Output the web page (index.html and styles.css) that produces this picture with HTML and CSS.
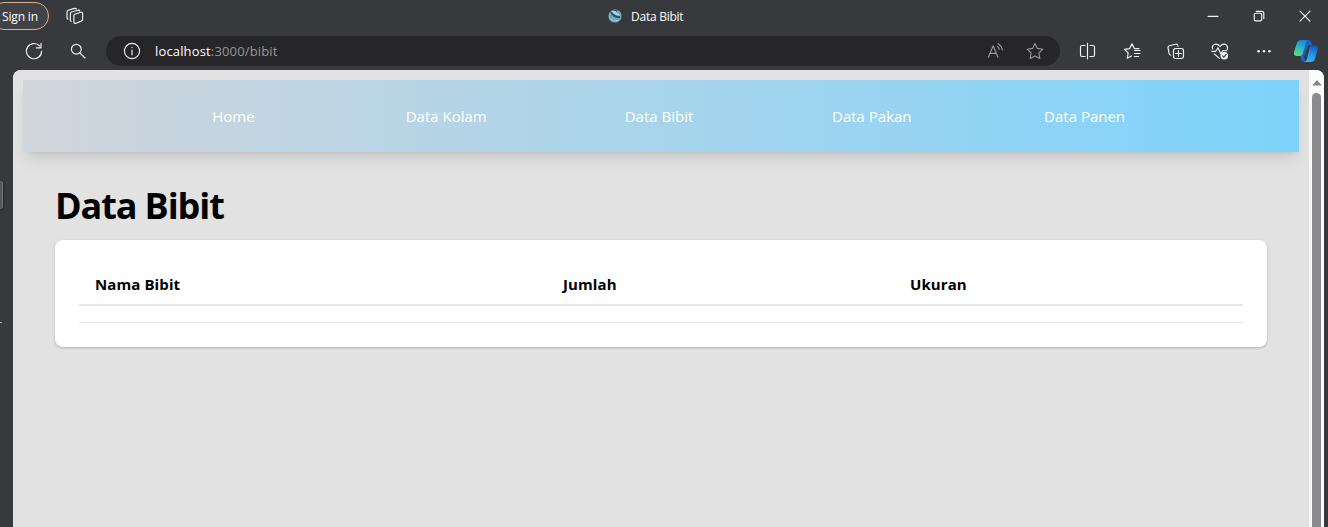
FILE: index.html
```html
<!DOCTYPE html>
<html lang="id">
<head>
<meta charset="utf-8">
<title>Data Bibit</title>
<link rel="stylesheet" href="styles.css">
</head>
<body>
<div class="window">
  <header class="titlebar">
    <div class="signin">Sign in</div>
    <svg class="icon workspaces" viewBox="0 0 20 20"><path d="M9.6 8.2 15.9 6.3Q17.6 6 17.6 7.5V13.2Q17.6 14.5 16.3 15.1L10.6 17.4Q8.9 17.8 8.9 16.2V9.3Q8.9 8.5 9.6 8.2ZM6.2 15.4Q5.3 15.2 5.3 14V7.8Q5.3 6.5 6.5 6L13 4.2Q14.5 4 14.8 5M3 13.2Q2 12.8 2 11.7V6Q2 4.7 3.2 4.2L9.5 2.4Q10.9 2.1 11.4 3.1"/></svg>
    <div class="page-title">
      <svg class="favicon" viewBox="0 0 16 16"><circle cx="8" cy="8" r="6.6" fill="#6fa9bd"/><path d="M3 3.5Q6 .5 11 2.3 8 3.5 10 5.5 13 7 13.5 9.5 10 11 6.7 8.8 3.8 6.7 3 3.5Z" fill="#35505d"/><path d="M4 3Q8 1.5 10 4.7 12.5 5.5 13 8 9 8 7 6Z" fill="#a6d4e4"/><path d="M2.5 10Q6 14 11.5 12.5" fill="none" stroke="#9bc9d8"/></svg>
      <span>Data Bibit</span>
    </div>
    <div class="controls">
      <span class="cell"><svg class="icon" viewBox="0 0 20 20"><path d="M5 10.3h10"/></svg></span>
      <span class="cell"><svg class="icon" viewBox="0 0 20 20"><rect x="5.3" y="7.2" width="7.4" height="7.6" rx="1.4"/><path d="M7.2 5.3h5.6q2 0 2 2v5.3"/></svg></span>
      <span class="cell"><svg class="icon" viewBox="0 0 20 20"><path d="m5 5.2 10 10M15 5.2l-10 10"/></svg></span>
    </div>
  </header>

  <div class="toolbar">
    <span class="tool"><svg class="icon" viewBox="0 0 20 20"><path d="M17.6 10.2A7.6 7.6 0 1 1 15.6 5M17 2.2v4.6h-4.7"/></svg></span>
    <span class="tool"><svg class="icon" viewBox="0 0 20 20"><circle cx="8.3" cy="8.2" r="4.9"/><path d="m12 12 5 5"/></svg></span>
    <div class="address">
      <svg class="icon info" viewBox="0 0 20 20"><circle cx="10" cy="10" r="7.6"/><path d="M10 9v4.8M10 6.2v.4"/></svg>
      <span class="url"><b>localhost</b>:3000/bibit</span>
      <span class="action"><svg class="icon dim" viewBox="0 0 20 20"><path d="M3.4 16.2 8.2 4.8 13 16.2M5 12.3h6.4M12.4 5.4q1.5 1.1 1.8 3.1M13.1 2.7q3.5 2 4.3 6.3"/></svg></span>
      <span class="action"><svg class="icon dim" viewBox="0 0 20 20"><path d="m10 2.5 2.4 4.9 5.4.8-3.9 3.8.9 5.4-4.8-2.5-4.8 2.5.9-5.4-3.9-3.8 5.4-.8Z"/></svg></span>
    </div>
    <span class="tool"><svg class="icon" viewBox="0 0 20 20"><path d="M9.5 2.2v15.6M7 4.5H4Q2.5 4.5 2.5 6v8q0 1.5 1.5 1.5h3M12 4.5h3q1.5 0 1.5 1.5v8q0 1.5-1.5 1.5h-3"/></svg></span>
    <span class="tool"><svg class="icon" viewBox="0 0 20 20"><path d="M17 7.6h-4.7L10 2.8 7.7 7.6l-5.2.8 3.7 3.6-.9 5.2 4.2-2.3M12.5 9.5H18M12.5 12.5H18M12.5 15.5h4"/></svg></span>
    <span class="tool"><svg class="icon" viewBox="0 0 20 20"><path d="M4.8 14.2Q3.4 13.8 3 12.2L2 6.7Q1.7 5.1 3.3 4.7L9.7 3.2Q11.4 2.8 11.8 4.3L12 5.2"/><rect x="7.5" y="7.5" width="10" height="10" rx="2.2"/><path d="M12.5 9.5v6M9.5 12.5h6"/></svg></span>
    <span class="tool"><svg class="icon" viewBox="0 0 20 20"><path d="M2.7 8Q1.5 4.7 4.4 3.4 7.3 2.3 10 5.3 12.7 2.3 15.6 3.4 18.3 4.7 17.2 8.5M1.7 10.3h4L8 6.7l2.8 6.1 2-3.1h4M4.3 12.8 9.3 17.4"/><circle class="solid" cx="14.3" cy="14.7" r="3.8"/><path class="check" d="m12.7 14.9 1.2 1.2 2.4-2.7"/></svg></span>
    <span class="tool"><svg class="icon" viewBox="0 0 20 20"><g class="solid"><circle cx="4.6" cy="10.2" r="1.3"/><circle cx="10" cy="10.2" r="1.3"/><circle cx="15.4" cy="10.2" r="1.3"/></g></svg></span>
    <span class="tool copilot"><svg viewBox="0 0 26 26" width="26" height="26">
      <defs>
        <linearGradient id="left" x1=".6" y1="0" x2=".3" y2="1"><stop stop-color="#1686df"/><stop offset=".45" stop-color="#25b5bc"/><stop offset="1" stop-color="#65d878"/></linearGradient>
        <linearGradient id="right" x1=".7" y1="0" x2=".3" y2="1"><stop stop-color="#1556c5"/><stop offset=".5" stop-color="#298fe8"/><stop offset="1" stop-color="#27b8f4"/></linearGradient>
      </defs>
      <path fill="#1a62c8" d="M12 2h3.5q2 0 2.6 2l1 3.5h-4L11 19.5l1 2.5q.7 2 2.5 2H11q-2.2 0-3-3l-1-4Z"/>
      <path fill="url(#left)" d="M7.5 2h8.2q-2 0-2.7 2.5L9.8 15.5Q9 18 6.8 18H4Q.2 18 1 14L4 4.8Q5 2 7.5 2Z"/>
      <path fill="url(#right)" d="M18.5 7.5h3.7q3.5 0 2.8 3.5L22 20.8Q20.9 24 18 24h-7q2 0 2.8-2.5L16.5 10q.5-2 2-2.5Z"/>
    </svg></span>
  </div>

  <div class="frame">
    <div class="gutter"><i class="edge-tab"></i><i class="edge-line"></i></div>
    <div class="viewport">
      <div class="page">
        <nav class="nav">
          <a>Home</a><a>Data Kolam</a><a>Data Bibit</a><a>Data Pakan</a><a>Data Panen</a>
        </nav>
        <main class="content">
          <h1>Data Bibit</h1>
          <section class="card">
            <div class="row head"><span>Nama Bibit</span><span>Jumlah</span><span>Ukuran</span></div>
            <div class="row empty"></div>
          </section>
        </main>
      </div>
      <div class="scrollbar">
        <svg class="arrow" viewBox="0 0 10 6"><path d="M5 0 9.8 5.5H.2Z" fill="#858585"/></svg>
        <div class="thumb"></div>
      </div>
    </div>
  </div>
</div>
</body>
</html>
```

FILE: styles.css
```css
* { box-sizing: border-box; }
body { margin: 0; font-family: "Open Sans", "Noto Sans", sans-serif; }
.window { width: 1328px; height: 527px; overflow: hidden; background: #38393c; display: flex; flex-direction: column; }

.icon { width: 20px; height: 20px; fill: none; stroke: #f3f3f3; stroke-width: 1.15; stroke-linecap: round; stroke-linejoin: round; display: block; flex: none; }
.icon.dim { stroke: #96979a; }
.icon .solid { fill: #f3f3f3; stroke: none; }
.icon .check { stroke: #38393c; }

.titlebar { height: 32px; display: flex; align-items: center; color: #fff; }
.signin { width: 59px; height: 28px; margin-left: -10px; margin-top: -1px; padding-left: 11px; border: 1px solid #deb08e; border-radius: 14px; background: #414246; font-size: 12px; line-height: 27px; letter-spacing: -0.15px; white-space: nowrap; }
.workspaces { margin-left: 16px; }
.page-title { margin-left: 522px; display: flex; align-items: center; gap: 8px; font-size: 12px; letter-spacing: -0.25px; white-space: nowrap; }
.favicon { width: 16px; height: 16px; }
.controls { margin-left: auto; display: flex; }
.cell { width: 46px; height: 32px; display: flex; align-items: center; justify-content: center; }

.toolbar { height: 38px; padding-left: 12px; display: flex; align-items: center; }
.tool { width: 44px; display: flex; justify-content: center; flex: none; }
.copilot { width: 40px; }
.address { width: 954px; height: 30px; margin: 0 6px; padding: 0 5px 0 16px; border-radius: 15px; background: #262628; display: flex; align-items: center; }
.url { margin-left: 13px; margin-right: auto; font-size: 13px; letter-spacing: 0.15px; color: #96979a; }
.url b { font-weight: 400; color: #fff; }
.action { width: 40px; display: flex; justify-content: center; }

.frame { flex: 1; display: flex; min-height: 0; }
.gutter { width: 13px; display: flex; flex-direction: column; }
.edge-tab { width: 3px; height: 28px; margin-top: 111px; background: #55565a; border-right: 1px solid #777; border-radius: 0 4px 4px 0; box-shadow: 0 1px 3px #18191b; }
.edge-line { width: 2px; height: 1px; margin-top: 113px; background: #bbb; }
.viewport { width: 1311px; display: flex; border-radius: 8px 8px 0 0; overflow: hidden; background: #fdfdfd; }
.page { width: 1296px; padding: 10px; background: #e2e2e2; }
.nav { height: 72px; padding: 0 108px 0 104px; display: grid; grid-template-columns: repeat(5, 1fr); align-items: center; text-align: center; font-size: 15px; color: #fff; background: linear-gradient(to right, #d1d5db, #7dd3fc); box-shadow: 0 10px 15px -3px rgba(0,0,0,.1), 0 4px 6px -4px rgba(0,0,0,.1); }
.content { padding: 34px 32px 0; }
h1 { margin: 0 0 14px; font-size: 36px; line-height: 40px; font-weight: 700; color: #000; letter-spacing: -1.1px; }
.card { height: 107px; padding: 24px; border-radius: 8px; background: #fff; box-shadow: 0 1px 3px rgba(0,0,0,.12), 0 1px 2px rgba(0,0,0,.1); }
.row { display: grid; grid-template-columns: 468px 347px 349px; }
.head { height: 42px; align-items: center; border-bottom: 2px solid #e5e5e5; font-size: 15px; font-weight: 700; color: #000; letter-spacing: 0.1px; }
.head span { padding-left: 16px; }
.empty { height: 17px; border-bottom: 1px solid #e5e5e5; }

.scrollbar { width: 15px; display: flex; flex-direction: column; align-items: center; background: #fcfcfc; }
.arrow { width: 10px; height: 6px; margin-top: 10px; }
.thumb { width: 9px; flex: 1; margin-top: 7px; border-radius: 5px 5px 0 0; background: #8b8b8b; }
```
